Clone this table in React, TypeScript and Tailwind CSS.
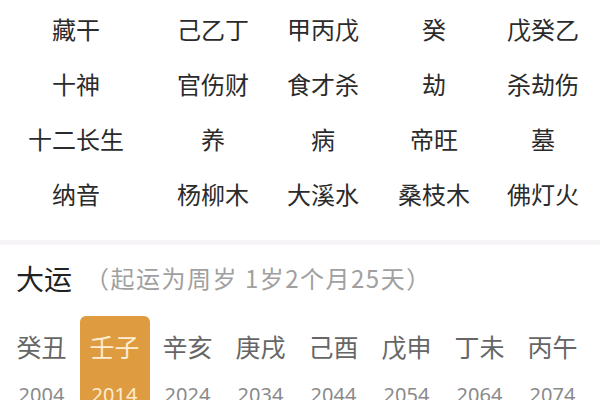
const rows = [
  ["藏干", "己乙丁", "甲丙戊", "癸", "戊癸乙"],
  ["十神", "官伤财", "食才杀", "劫", "杀劫伤"],
  ["十二长生", "养", "病", "帝旺", "墓"],
  ["纳音", "杨柳木", "大溪水", "桑枝木", "佛灯火"],
];

const yun = [
  { gz: "癸丑", year: "2004" },
  { gz: "壬子", year: "2014", active: true },
  { gz: "辛亥", year: "2024" },
  { gz: "庚戌", year: "2034" },
  { gz: "己酉", year: "2044" },
  { gz: "戊申", year: "2054" },
  { gz: "丁未", year: "2064" },
  { gz: "丙午", year: "2074" },
];

export default function App() {
  return (
    <div
      className="w-[600px] h-[400px] overflow-hidden bg-white"
      style={{ fontFamily: '"Noto Sans CJK SC", "Noto Sans", sans-serif' }}
    >
      {/* 四柱表 */}
      <div className="pt-px">
        {rows.map((row, i) => (
          <div key={i} className="grid grid-cols-[152px_122px_98px_124px_94px] h-[55px] items-center">
            {row.map((cell, j) => (
              <div key={j} className="text-center text-[24px] leading-none text-[#2b2b2b]">
                {cell}
              </div>
            ))}
          </div>
        ))}
      </div>

      <div className="mt-[19px] h-[5px] bg-[#f6f4f6]" />

      {/* 大运 */}
      <div className="flex items-center h-[66px] pl-[16px]">
        <span className="text-[28px] leading-none text-[#222]">大运</span>
        <span className="ml-[13px] text-[24px] leading-none text-[#a0a0a0] tracking-[1.5px]">（起运为周岁 1岁2个月25天）</span>
      </div>

      <div className="flex px-[5px]">
        {yun.map((y) => (
          <div key={y.gz} className="w-[73px] flex justify-center">
            <div
              className={
                y.active
                  ? "w-[70px] mt-[5px] rounded-[6px] bg-[#df9b3f] flex flex-col items-center pt-[18px]"
                  : "w-[70px] mt-[5px] flex flex-col items-center pt-[18px]"
              }
            >
              <span className={y.active ? "text-[25px] leading-none text-[#fdedd2]" : "text-[25px] leading-none text-[#666]"}>
                {y.gz}
              </span>
              <span
                className={y.active ? "mt-[26px] text-[20px] leading-none text-[#fdedd2]" : "mt-[26px] text-[20px] leading-none text-[#8a8a8a]"}
                style={{ fontFamily: '"Noto Sans", sans-serif' }}
              >
                {y.year}
              </span>
              <div className="h-[20px]" />
            </div>
          </div>
        ))}
      </div>
    </div>
  );
}
